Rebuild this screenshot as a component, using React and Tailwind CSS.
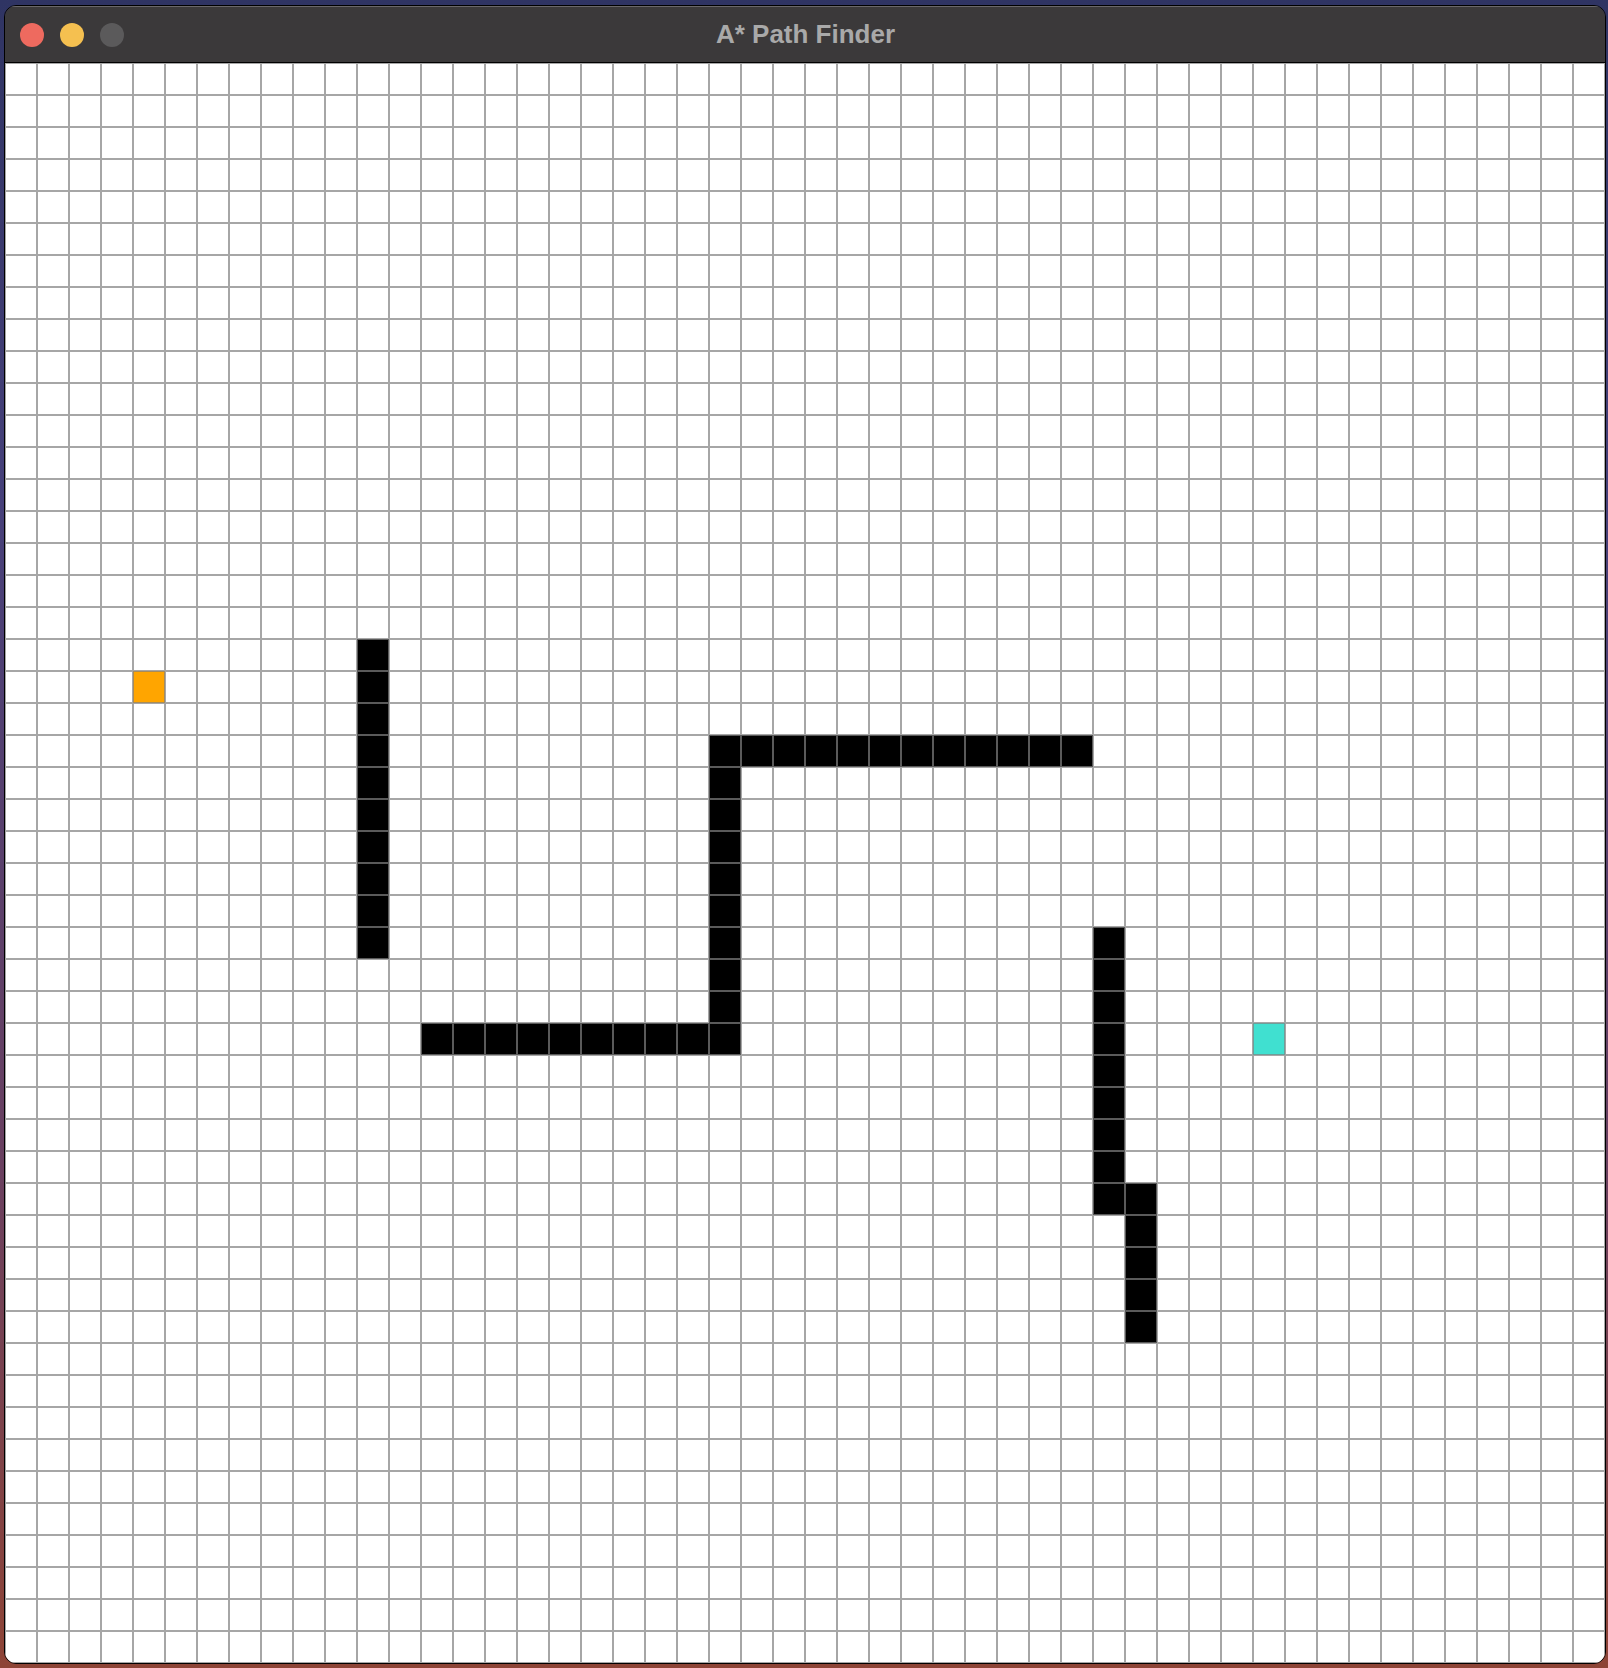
import React from "react";

const N = 50;

function buildGrid() {
  const g = Array.from({ length: N }, () => Array(N).fill(0));
  const wall = (c, r) => (g[r][c] = 1);
  for (let r = 18; r <= 27; r++) wall(11, r);
  for (let c = 13; c <= 22; c++) wall(c, 30);
  for (let r = 21; r <= 30; r++) wall(22, r);
  for (let c = 22; c <= 33; c++) wall(c, 21);
  for (let r = 27; r <= 35; r++) wall(34, r);
  for (let r = 35; r <= 39; r++) wall(35, r);
  g[19][4] = 2;
  g[30][39] = 3;
  return g;
}

const CELL = {
  0: "bg-white",
  1: "bg-black",
  2: "bg-[#ffa500]",
  3: "bg-[#40e0d0]",
};

export default function App() {
  const grid = buildGrid();
  return (
    <div className="w-[1608px] h-[1668px] pt-[5px] pl-[4px] bg-[linear-gradient(to_bottom,#2f3463_0%,#46407a_30%,#6a4060_70%,#8e4436_100%)] overflow-hidden">
      <div className="w-[1602px] border border-black rounded-[12px] overflow-hidden flex flex-col">
        <div className="relative h-[57px] bg-[#3b393a] border-b border-black shadow-[inset_0_1px_0_#6a6869] flex items-center">
          <div className="flex items-center gap-[16px] pl-[15px] pt-[1px]">
            <div className="w-[24px] h-[24px] rounded-full bg-[#ee6a5f]" />
            <div className="w-[24px] h-[24px] rounded-full bg-[#f5c050]" />
            <div className="w-[24px] h-[24px] rounded-full bg-[#5b5a5b]" />
          </div>
          <div className="absolute inset-0 flex items-center justify-center pl-[1px]">
            <span className="font-['Liberation_Sans',Arial,sans-serif] font-bold text-[26px] leading-none text-[#a9a9a9]">
              A* Path Finder
            </span>
          </div>
        </div>
        <div className="grid grid-cols-[repeat(50,32px)] grid-rows-[repeat(50,32px)] w-[1600px] h-[1600px]">
          {grid.map((row, r) =>
            row.map((v, c) => (
              <div
                key={r * N + c}
                className={`${CELL[v]} border border-[#808080b3]`}
              />
            ))
          )}
        </div>
      </div>
    </div>
  );
}
